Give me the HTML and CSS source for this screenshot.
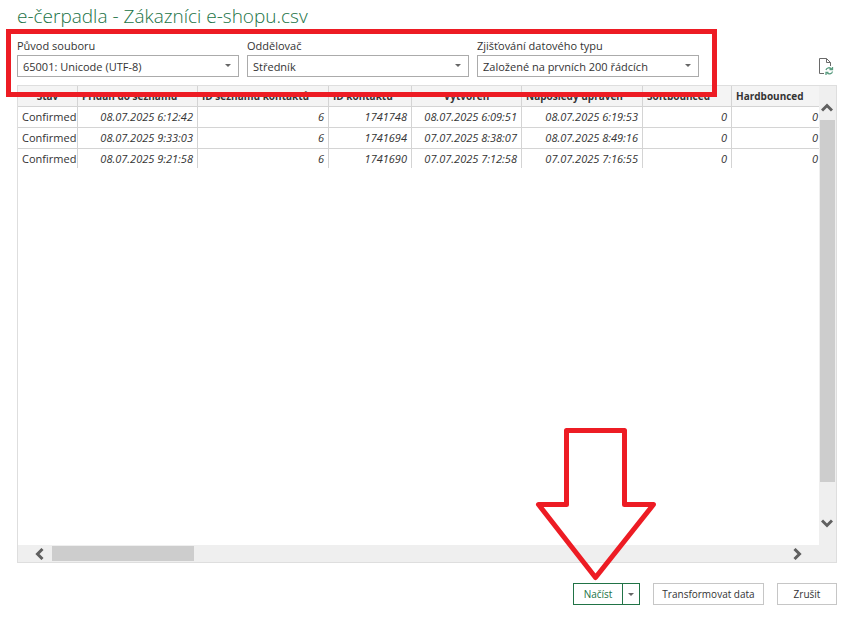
FILE: index.html
```html
<!DOCTYPE html>
<html lang="cs">
<head>
<meta charset="utf-8">
<title>e-čerpadla - Zákazníci e-shopu.csv</title>
<link rel="stylesheet" href="styles.css">
</head>
<body>
<main class="dialog">
  <h1 class="title">e-čerpadla - Zákazníci e-shopu.csv</h1>
  <div class="toolbar">
    <div class="options">
      <div class="field">
        <label for="origin">Původ souboru</label>
        <div class="picker"><select id="origin"><option>65001: Unicode (UTF-8)</option></select></div>
      </div>
      <div class="field">
        <label for="delimiter">Oddělovač</label>
        <div class="picker"><select id="delimiter"><option>Středník</option></select></div>
      </div>
      <div class="field">
        <label for="detection">Zjišťování datového typu</label>
        <div class="picker"><select id="detection"><option>Založené na prvních 200 řádcích</option></select></div>
      </div>
      <div class="highlight"></div>
    </div>
    <button class="refresh" type="button" aria-label="Aktualizovat">
      <svg width="16" height="18" viewBox="0 0 16 18" fill="none">
        <path d="M6 15.5H1.500V.5H8.500L12.500 4.500V8M8.500 .5V4.500H12.500" stroke="#6a6a6a"/>
        <path d="M8 12C8.500 9.500 12 9 13.500 11M14.500 9V11.500H11.500M14.500 13.500C14 16.200 10.500 16.500 9 14.500M8 17V14.500H10.500" stroke="#5a9c80" stroke-width="1.300"/>
      </svg>
    </button>
  </div>
  <section class="preview">
    <div class="sheet">
      <table>
        <colgroup><col class="c-state"><col class="c-added"><col class="c-list"><col class="c-contact"><col class="c-created"><col class="c-edited"><col class="c-soft"><col></colgroup>
        <thead>
          <tr><th class="center">Stav</th><th>Přidán do seznamu</th><th>ID seznamu kontaktů</th><th>ID kontaktu</th><th class="center">Vytvořen</th><th>Naposledy upraven</th><th>Softbounced</th><th>Hardbounced</th></tr>
        </thead>
        <tbody>
          <tr><td class="text">Confirmed</td><td>08.07.2025 6:12:42</td><td>6</td><td>1741748</td><td>08.07.2025 6:09:51</td><td>08.07.2025 6:19:53</td><td>0</td><td>0</td></tr>
          <tr><td class="text">Confirmed</td><td>08.07.2025 9:33:03</td><td>6</td><td>1741694</td><td>07.07.2025 8:38:07</td><td>08.07.2025 8:49:16</td><td>0</td><td>0</td></tr>
          <tr><td class="text">Confirmed</td><td>08.07.2025 9:21:58</td><td>6</td><td>1741690</td><td>07.07.2025 7:12:58</td><td>07.07.2025 7:16:55</td><td>0</td><td>0</td></tr>
        </tbody>
      </table>
    </div>
    <div class="vbar">
      <svg width="12" height="9" viewBox="0 0 12 9"><path d="M1 7.500L6 2.500L11 7.500" fill="none" stroke="#606060" stroke-width="3"/></svg>
      <div class="vtrack"><div class="vthumb"></div></div>
      <svg width="12" height="9" viewBox="0 0 12 9"><path d="M1 1.500L6 6.500L11 1.500" fill="none" stroke="#606060" stroke-width="3"/></svg>
    </div>
    <div class="hbar">
      <svg width="9" height="12" viewBox="0 0 9 12"><path d="M7.500 1L2.500 6L7.500 11" fill="none" stroke="#606060" stroke-width="3"/></svg>
      <div class="htrack"><div class="hthumb"></div></div>
      <svg width="9" height="12" viewBox="0 0 9 12"><path d="M1.500 1L6.500 6L1.500 11" fill="none" stroke="#606060" stroke-width="3"/></svg>
    </div>
  </section>
  <footer class="actions">
    <div class="split">
      <button class="load" type="button">Načíst</button>
      <button class="more" type="button" aria-label="Další možnosti načtení"></button>
      <svg class="arrow" width="122" height="153" viewBox="0 0 122 153"><path d="M31.500 2.500H89.500V76.500H118.500L60.500 149.500L3.500 76.500H31.500Z" fill="none" stroke="#ed1c24" stroke-width="5" stroke-linejoin="round"/></svg>
    </div>
    <button class="transform" type="button">Transformovat data</button>
    <button class="cancel" type="button">Zrušit</button>
  </footer>
</main>
</body>
</html>
```
FILE: styles.css
```css
* { box-sizing: border-box; }

body {
  margin: 0;
  background: #fff;
  color: #333;
  font-family: "Open Sans", "Noto Sans", sans-serif;
  font-size: 11px;
  line-height: 16px;
}

button, select { font: inherit; color: inherit; }

.dialog {
  display: flex;
  flex-direction: column;
  min-height: 100vh;
  padding: 4px 14px 16px 17px;
}

.title {
  margin: 0;
  color: #217346;
  font-size: 19px;
  font-weight: 300;
  line-height: 24px;
}

.toolbar {
  display: flex;
  justify-content: space-between;
  align-items: flex-end;
  margin-top: 10px;
}

.options {
  position: relative;
  display: flex;
  gap: 8px;
}

.field { width: 222px; }

.field label { display: block; margin-bottom: 1px; }

.picker { position: relative; }

.picker select {
  display: block;
  width: 100%;
  height: 22px;
  padding: 1px 20px 0 5px;
  appearance: none;
  border: 1px solid #ababab;
  border-radius: 0;
  background: #fff;
}

.picker::after, .more::after {
  content: "";
  border: 3px solid transparent;
  border-top-color: #666;
  border-bottom: 0;
}

.picker::after {
  position: absolute;
  top: 9px;
  right: 8px;
  pointer-events: none;
}

.highlight {
  position: absolute;
  z-index: 1;
  inset: -9px -18px -20px -11px;
  border: 5px solid #ed1c24;
  pointer-events: none;
}

.refresh {
  display: flex;
  padding: 0;
  margin: 0 3px 1px 0;
  border: 0;
  background: none;
}

.preview {
  display: grid;
  grid-template-columns: minmax(0, 1fr) 17px;
  grid-template-rows: minmax(0, 1fr) 17px;
  flex: 1;
  margin-top: 8px;
  border: 1px solid #dedede;
}

.sheet { overflow: hidden; }

table {
  width: 100%;
  table-layout: fixed;
  border-collapse: separate;
  border-spacing: 0;
}

.c-state { width: 60px; }
.c-added { width: 120px; }
.c-list { width: 131px; }
.c-contact { width: 83px; }
.c-created { width: 110px; }
.c-edited { width: 121px; }
.c-soft { width: 89px; }

th, td {
  height: 21px;
  padding: 0 4px;
  border-right: 1px solid #d4d4d4;
  border-bottom: 1px solid #d4d4d4;
  line-height: 20px;
  white-space: nowrap;
}

th {
  background: #f4f4f4;
  font-size: 10px;
  font-weight: 700;
  text-align: left;
}

.center { text-align: center; }

td { text-align: right; font-style: italic; }

.text { text-align: left; font-style: normal; }

tbody tr:last-child td {
  height: 19px;
  padding-top: 1px;
  border-bottom: 0;
  line-height: 18px;
}

th:last-child, td:last-child { padding-right: 1px; border-right: 0; }

.vbar {
  display: flex;
  flex-direction: column;
  align-items: center;
  padding: 17px 1px 17px 0;
  background: #efefef;
}

.vtrack { flex: 1; width: 100%; margin: 8px 0 5px; }

.vthumb { width: 15px; height: 92%; margin-left: 1px; background: #cdcdcd; }

.hbar {
  grid-column: 1 / -1;
  display: flex;
  align-items: center;
  padding: 0 34px 0 17px;
  background: #efefef;
}

.htrack { flex: 1; margin: 0 8px; }

.hthumb { width: 142px; height: 15px; background: #cdcdcd; }

.actions {
  display: flex;
  justify-content: flex-end;
  margin-top: 20px;
  font-size: 10px;
}

.actions button {
  height: 22px;
  padding: 0;
  border: 1px solid #c6c6c6;
  background: #fff;
}

.split { position: relative; display: flex; }

.actions .load {
  width: 50px;
  border-color: #217346;
  color: #217346;
}

.actions .more {
  display: flex;
  align-items: center;
  justify-content: center;
  width: 17px;
  border-color: #217346;
  border-left: 0;
}

.arrow {
  position: absolute;
  left: -38px;
  bottom: calc(100% + 2px);
  pointer-events: none;
}

.transform { width: 111px; margin: 0 13px; }

.cancel { width: 60px; }
```
